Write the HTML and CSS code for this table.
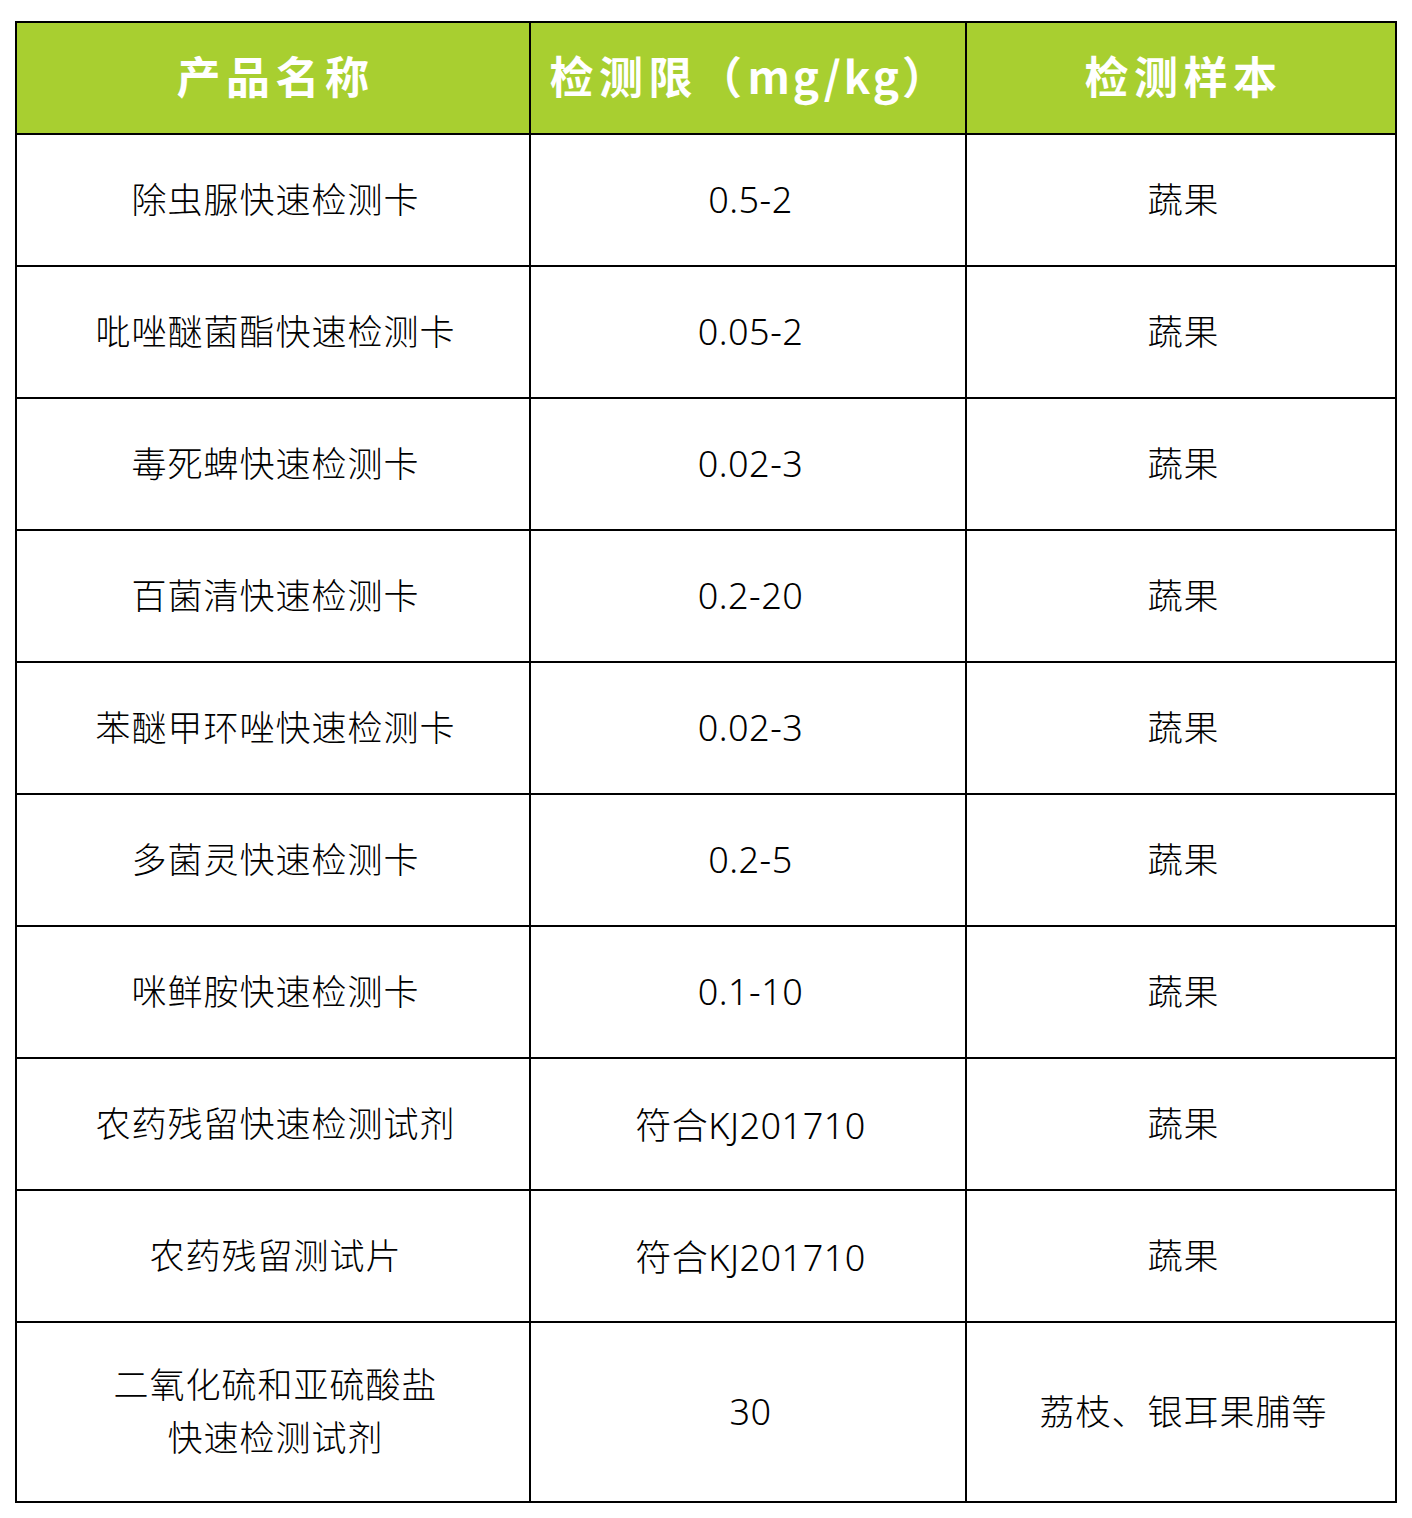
FILE: index.html
```html
<!DOCTYPE html>
<html lang="zh-CN">
<head>
<meta charset="utf-8">
<title>产品检测表</title>
<link rel="stylesheet" href="styles.css">
</head>
<body>
<div class="table">
  <div class="cell head">产品名称</div>
  <div class="cell head">检测限（<span class="unit">mg/kg</span>）</div>
  <div class="cell head">检测样本</div>

  <div class="cell">除虫脲快速检测卡</div>
  <div class="cell num">0.5-2</div>
  <div class="cell">蔬果</div>

  <div class="cell">吡唑醚菌酯快速检测卡</div>
  <div class="cell num">0.05-2</div>
  <div class="cell">蔬果</div>

  <div class="cell">毒死蜱快速检测卡</div>
  <div class="cell num">0.02-3</div>
  <div class="cell">蔬果</div>

  <div class="cell">百菌清快速检测卡</div>
  <div class="cell num">0.2-20</div>
  <div class="cell">蔬果</div>

  <div class="cell">苯醚甲环唑快速检测卡</div>
  <div class="cell num">0.02-3</div>
  <div class="cell">蔬果</div>

  <div class="cell">多菌灵快速检测卡</div>
  <div class="cell num">0.2-5</div>
  <div class="cell">蔬果</div>

  <div class="cell">咪鲜胺快速检测卡</div>
  <div class="cell num">0.1-10</div>
  <div class="cell">蔬果</div>

  <div class="cell">农药残留快速检测试剂</div>
  <div class="cell num">符合KJ201710</div>
  <div class="cell">蔬果</div>

  <div class="cell">农药残留测试片</div>
  <div class="cell num">符合KJ201710</div>
  <div class="cell">蔬果</div>

  <div class="cell multi">二氧化硫和亚硫酸盐<br>快速检测试剂</div>
  <div class="cell num">30</div>
  <div class="cell">荔枝、银耳果脯等</div>
</div>
</body>
</html>
```
FILE: styles.css
```css
html, body {
  margin: 0;
  padding: 0;
  background: #ffffff;
}

body {
  padding: 21px 0 0 15px;
  font-family: "Noto Sans", "Noto Sans CJK SC", sans-serif;
  color: #000000;
}

.table {
  display: grid;
  width: 1382px;
  box-sizing: border-box;
  grid-template-columns: 512px 434px 428px;
  grid-template-rows: 110px repeat(9, 130px) 178px;
  gap: 2px;
  padding: 2px;
  background: #000000;
}

.cell {
  background: #ffffff;
  display: flex;
  align-items: center;
  justify-content: center;
  text-align: center;
  font-family: "Noto Sans CJK SC", sans-serif;
  font-weight: 300;
  font-size: 35px;
  letter-spacing: 1px;
  padding: 0 0 6px 5px;
}

.cell.num {
  font-family: "Noto Sans", "Noto Sans CJK SC", sans-serif;
  font-weight: 300;
  font-size: 36px;
  letter-spacing: 0.5px;
  padding: 0 0 2px 5px;
}

.cell.head {
  background: #a8cf30;
  color: #ffffff;
  font-family: "Noto Sans CJK SC", sans-serif;
  font-weight: 700;
  font-size: 44px;
  letter-spacing: 5.5px;
  padding: 0 0 6px 5px;
}

.unit {
  letter-spacing: 3px;
}

.cell.multi {
  line-height: 53px;
}
```
